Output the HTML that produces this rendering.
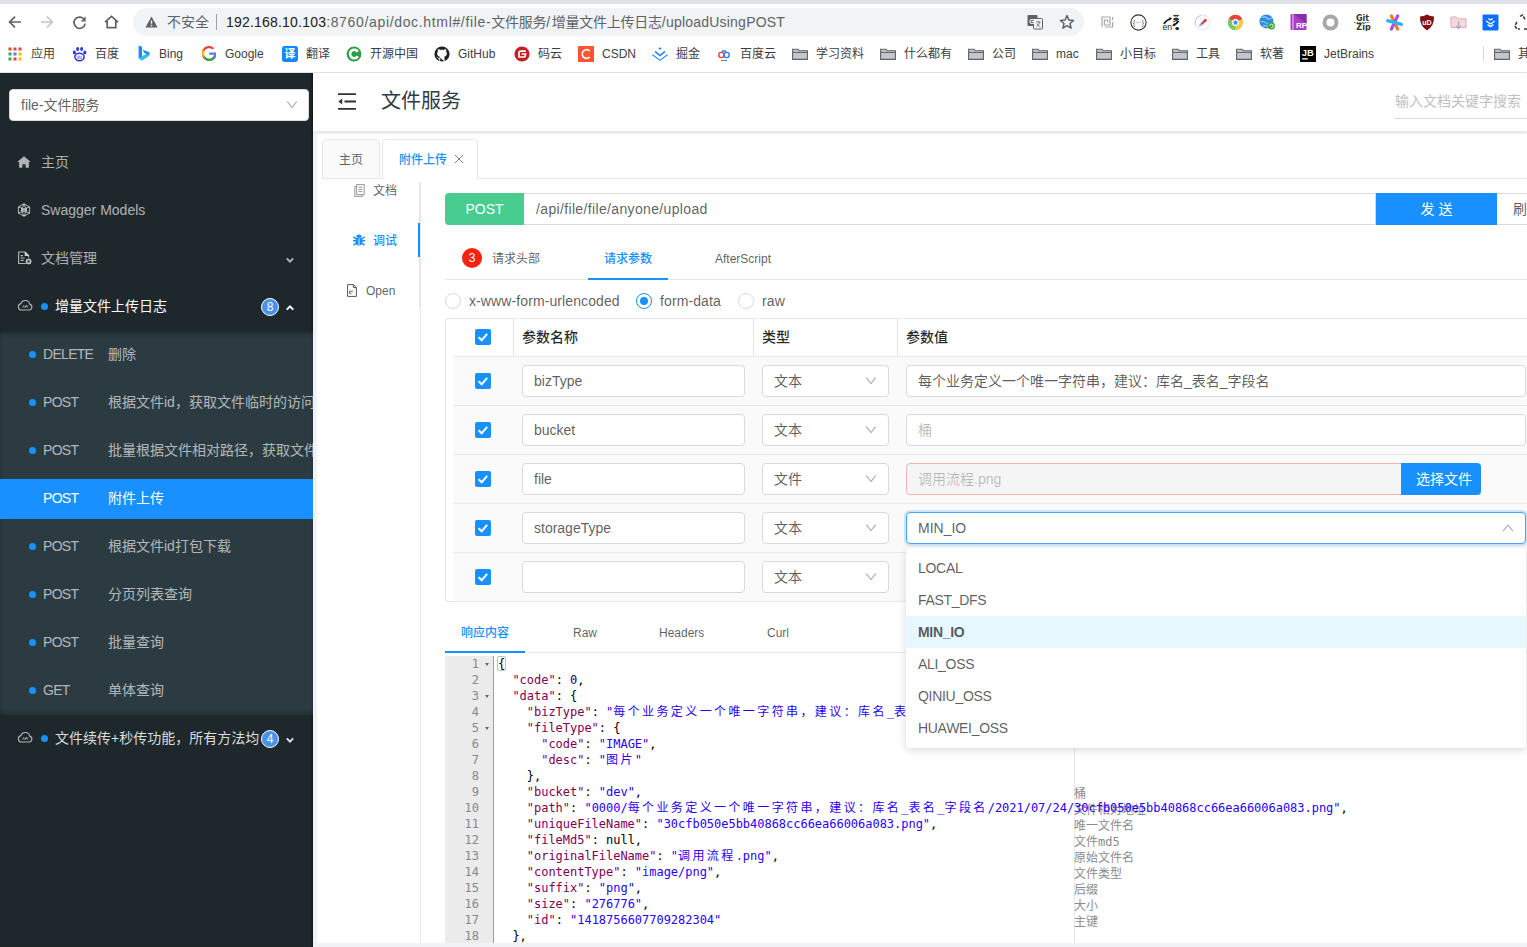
<!DOCTYPE html>
<html lang="zh-CN">
<head>
<meta charset="utf-8">
<title>文件服务</title>
<style>
*{box-sizing:border-box;margin:0;padding:0}
html,body{width:1527px;height:947px;overflow:hidden;background:#f0f2f5}
body{font-family:"Liberation Sans","Noto Sans CJK SC",sans-serif;font-size:14px;color:rgba(0,0,0,.65);position:relative}
.abs{position:absolute}
svg{display:block}
/* ---------- browser chrome ---------- */
#chrome{position:absolute;left:0;top:0;width:1527px;height:73px;background:#fff;border-bottom:1px solid #e3e5e8}
#chrome .strip{position:absolute;left:0;top:0;width:1527px;height:4px;background:#dee1e6}
#chrome .pill{position:absolute;left:133px;top:8px;width:951px;height:28px;border-radius:14px;background:#f1f3f4}
#chrome .url{position:absolute;left:226px;top:13px;font-size:14px;line-height:18px;color:#5f6368;white-space:nowrap;letter-spacing:.1px}
#chrome .url b{font-weight:400;color:#202124}
#chrome .unsafe{position:absolute;left:167px;top:13px;font-size:14px;line-height:18px;color:#5f6368}
#chrome .sep{position:absolute;left:216px;top:14px;width:1px;height:16px;background:#9aa0a6}
.bm{position:absolute;top:45px;height:18px;line-height:18px;font-size:12px;color:#3c4043;white-space:nowrap}
.bmi{position:absolute;top:46px;width:16px;height:16px}
/* ---------- sidebar ---------- */
#side{position:absolute;left:0;top:73px;width:313px;height:874px;background:#1e282c;box-shadow:inset -2px 0 2px -1px rgba(0,0,0,.45);overflow:hidden;color:rgba(255,255,255,.65);font-size:14px}
#side .sel{position:absolute;left:9px;top:16px;width:300px;height:32px;background:#fff;border-radius:4px;border:1px solid #d9d9d9;color:rgba(0,0,0,.65);line-height:30px;padding-left:11px}
#side .sub{position:absolute;left:0;top:258px;width:313px;height:384px;background:#2c3b41;box-shadow:inset 0 5px 6px -4px rgba(0,0,0,.45),inset 0 -5px 6px -4px rgba(0,0,0,.35)}
#side .it{position:absolute;left:0;width:313px;height:40px;line-height:40px;white-space:nowrap}
#side .it .t{position:absolute;left:41px;top:0}
#side .dot{position:absolute;width:7px;height:7px;border-radius:3.5px;background:#1890ff;top:17px;margin-left:-.5px}
#side .m{position:absolute;left:43px;top:0;letter-spacing:-.7px}
#side .n{position:absolute;left:108px;top:0}
#side .badge{position:absolute;left:261px;top:12px;width:18px;height:18px;border-radius:9px;background:#4793ec;border:1px solid #fff;color:#fff;font-size:12px;line-height:16px;text-align:center}
#side .ic{position:absolute;left:17px;top:13px;color:rgba(255,255,255,.65)}
#side .chev{position:absolute;left:285px;top:17px}
#side .selarr{position:absolute;left:276px;top:10px}
#side .act{background:#1890ff;color:#fff;margin-top:1px}
#side .act span{margin-top:-1px}
/* ---------- header ---------- */
#hdr{position:absolute;left:313px;top:73px;width:1214px;height:58px;background:#fff;box-shadow:0 1px 4px rgba(0,21,41,.08)}
#hdr .title{position:absolute;left:68px;top:13px;font-size:20px;line-height:30px;color:#2f3a46}
#hdr .search{position:absolute;left:1082px;top:17px;font-size:14px;line-height:22px;color:#bfbfbf;white-space:nowrap}
#hdr .sline{position:absolute;left:1081px;top:45px;width:140px;height:1px;background:#d9d9d9}
/* ---------- main panel ---------- */
#main{position:absolute;left:317px;top:134px;width:1210px;height:809px;background:#fff;overflow:hidden}

#main .tab{position:absolute;top:5px;height:40px;border:1px solid #e8e8e8;border-radius:4px 4px 0 0;background:#fafafa;font-size:12px;line-height:40px;white-space:nowrap}
#main .tabline{position:absolute;left:5px;top:44px;width:1205px;height:1px;background:#e8e8e8}
#main .vt{position:absolute;margin-top:1px;font-size:12px;line-height:20px;white-space:nowrap}
#main .vline{position:absolute;left:103px;top:48px;width:1px;height:761px;background:#e8e8e8}
#main .vline2{position:absolute;left:102px;top:48px;width:1px;height:125px;background:#e8e8e8}
#main .vbar{position:absolute;left:101px;top:89px;width:2px;height:34px;background:#1890ff}
.post{position:absolute;left:128px;top:59px;width:79px;height:32px;background:#49cc90;color:#fff;font-size:14px;line-height:32px;text-align:center;border-radius:4px 0 0 4px}
.urlin{letter-spacing:.35px;position:absolute;left:207px;top:59px;width:852px;height:32px;border:1px solid #d9d9d9;border-left:0;line-height:30px;padding-left:12px;font-size:14px;color:rgba(0,0,0,.65)}
.send{position:absolute;left:1059px;top:59px;width:121px;height:32px;background:#1890ff;color:#fff;line-height:32px;text-align:center;font-size:14px}
.refresh{position:absolute;left:1180px;top:59px;width:100px;height:32px;border:1px solid #d9d9d9;border-left:0;line-height:31px;padding-left:16px;font-size:14px;color:rgba(0,0,0,.65);white-space:nowrap}
.t2{position:absolute;margin-top:1px;font-size:12px;line-height:20px;white-space:nowrap;color:rgba(0,0,0,.65)}
.blue{color:#1890ff;font-weight:500}
.ink{position:absolute;height:2px;background:#1890ff}
.hline{position:absolute;height:1px;background:#e8e8e8}
.rbadge{position:absolute;left:145px;top:114px;width:20px;height:20px;border-radius:10px;background:#f8220f;color:#fff;font-size:12px;line-height:20px;text-align:center}
.radio{position:absolute;top:159px;width:16px;height:16px;border-radius:8px;border:1px solid #d9d9d9;background:#fff}
.radio.on{border-color:#1890ff}
.radio.on:after{content:"";position:absolute;left:3px;top:3px;width:8px;height:8px;border-radius:4px;background:#1890ff}
.rl{letter-spacing:.1px;position:absolute;top:156px;font-size:14px;line-height:22px;white-space:nowrap}
/* table */
#tbl{position:absolute;left:128px;top:184px;width:1100px;height:284px;border:1px solid #e8e8e8;border-radius:4px 0 0 4px;border-right:0}
#tbl .rowbg{position:absolute;left:8px;width:1100px;height:48px;background:#fafafa}
#tbl .rl2{position:absolute;left:8px;width:1100px;height:1px;background:#e8e8e8}
#tbl .cl{position:absolute;top:0;width:1px;height:282px;background:#e8e8e8}
#tbl .th{position:absolute;top:7px;font-size:14px;line-height:22px;font-weight:500;color:rgba(0,0,0,.85);white-space:nowrap}
.cb{position:absolute;left:29px;width:16px;height:16px;border-radius:2px;background:#1890ff}
.cb svg{position:absolute;left:0;top:0}
.inp{position:absolute;height:32px;border:1px solid #d9d9d9;border-radius:4px;background:#fff;font-size:14px;line-height:30px;padding-left:11px;color:rgba(0,0,0,.65);white-space:nowrap;overflow:hidden}
.inp .arr{position:absolute;right:11px;top:10px}

/* value column */
.vinp{position:absolute;left:589px;width:620px;height:32px;border:1px solid #d9d9d9;border-radius:4px;background:#fff;font-size:14px;line-height:30px;padding-left:11px;color:rgba(0,0,0,.65);white-space:nowrap;overflow:hidden}
.ph{color:#bfbfbf}
.fbtn{position:absolute;left:1084px;top:329px;width:80px;height:32px;background:#1890ff;color:#fff;font-size:14px;line-height:32px;padding-left:15px;border-radius:0 4px 4px 0;white-space:nowrap}
#dd{position:absolute;left:589px;top:414px;width:620px;height:200px;background:#fff;border-radius:4px;box-shadow:0 2px 8px rgba(0,0,0,.15);padding-top:4px;z-index:10}
#dd div{letter-spacing:-.3px;height:32px;line-height:32px;padding-left:12px;font-size:14px;color:rgba(0,0,0,.65);white-space:nowrap}
#dd .s{background:#e6f7ff;font-weight:700}
/* editor */
#ed{position:absolute;left:128px;top:522px;width:1082px;height:287px;background:#fff;font-family:"DejaVu Sans Mono","Liberation Mono","Noto Sans CJK SC",monospace;font-size:12px;line-height:16px;color:#000;overflow:hidden}
#ed .gut{position:absolute;left:0;top:0;width:49px;height:288px;background:#ebebeb;border-right:1px solid #9f9f9f;color:#888}
#ed .gut div{height:16px;text-align:right;padding-right:14px;position:relative;top:0}
#ed .gut i{position:absolute;right:4.5px;top:7px;width:0;height:0;border-left:2.8px solid transparent;border-right:2.8px solid transparent;border-top:3.5px solid #666}
#ed .code{position:absolute;z-index:2;left:53px;top:0;white-space:pre;letter-spacing:-.024px}
#ed .code div{height:16px}
#ed .k{color:#7f0055}
#ed .s{color:#2a00ff}
#ed .n{color:#000080}
#ed .c{letter-spacing:2.4px}
#ed .pm{position:absolute;left:629px;top:0;width:1px;height:288px;background:#e8e8e8}
#ed .an{position:absolute;left:629px;margin-top:2px;color:#8c8c8c;white-space:nowrap}
#chrome .url b{letter-spacing:.2px}#u5{letter-spacing:.22px}#u1{letter-spacing:.66px}#u2,#u4{letter-spacing:-.25px}#u3{letter-spacing:1.6px}
</style>
</head>
<body>
<div id="chrome">
  <div class="strip"></div>
  <div class="pill"></div>
  <div class="unsafe">不安全</div><div class="sep"></div>
  <div class="url"><b>192.168.10.103</b><span id="u1">:8760/api/doc.html#/file-</span><span id="u2">文件服务</span><span id="u3">/</span><span id="u4">增量文件上传日志</span><span id="u5">/uploadUsingPOST</span></div>
  <svg class="abs" style="left:8px;top:15px" width="14" height="14" viewBox="0 0 14 14" ><path d="M13 7 H2.2 M7 1.6 L1.6 7 L7 12.4" fill="none" stroke="#5f6368" stroke-width="1.7"/></svg><svg class="abs" style="left:40px;top:15px" width="14" height="14" viewBox="0 0 14 14" ><path d="M1 7 H11.8 M7 1.6 L12.4 7 L7 12.4" fill="none" stroke="#c4c7cb" stroke-width="1.7"/></svg><svg class="abs" style="left:72px;top:15px" width="15" height="15" viewBox="0 0 15 15" ><path d="M12.6 5.2 A5.6 5.6 0 1 0 13.1 8.6" fill="none" stroke="#5f6368" stroke-width="1.7"/><path d="M13.6 1.6 V6.4 H8.8 Z" fill="#5f6368"/></svg><svg class="abs" style="left:104px;top:15px" width="15" height="14" viewBox="0 0 15 14" ><path d="M1 7.2 L7.5 1.4 L14 7.2 M3.2 6 V12.6 H11.8 V6" fill="none" stroke="#5f6368" stroke-width="1.7"/></svg><svg class="abs" style="left:145px;top:16px" width="13" height="12" viewBox="0 0 13 12" ><path d="M6.5 .6 L12.6 11.4 H.4 Z" fill="#5f6368"/><path d="M6.5 4.4 V7.8 M6.5 8.8 V10.2" stroke="#f1f3f4" stroke-width="1.3"/></svg><svg class="abs" style="left:1027px;top:14px" width="16" height="16" viewBox="0 0 16 16" ><rect x="0.5" y="1" width="10" height="11" rx="1" fill="#5f6368"/><rect x="6.5" y="4.5" width="9" height="10.5" rx="1" fill="#f1f3f4" stroke="#5f6368" stroke-width="1"/><text x="2.2" y="9.6" font-size="7" font-family="Liberation Sans,sans-serif" font-weight="700" fill="#fff">G</text><path d="M9 8 H13.6 M11.3 7 V8 M12.8 8 Q12 11 9.4 12.6 M10 9.6 Q11 11.6 13.4 12.8" stroke="#5f6368" stroke-width=".8" fill="none"/></svg><svg class="abs" style="left:1059px;top:14px" width="16" height="16" viewBox="0 0 16 16" ><path d="M8 1.6 L9.9 6 L14.6 6.4 L11 9.5 L12.1 14.2 L8 11.7 L3.9 14.2 L5 9.5 L1.4 6.4 L6.1 6 Z" fill="none" stroke="#5f6368" stroke-width="1.5" stroke-linejoin="round"/></svg><svg class="abs" style="left:1101px;top:16px" width="13" height="12" viewBox="0 0 13 12" ><path d="M1 11 V1 H9 V9 H3.4 V4 H6.6 V6.4 M11.6 1 V4 M11.6 6 V11 H4" fill="none" stroke="#a5a9ae" stroke-width="1.2"/></svg><svg class="abs" style="left:1130px;top:14px" width="17" height="17" viewBox="0 0 17 17" ><circle cx="8.5" cy="8.5" r="7.6" fill="#fff" stroke="#333" stroke-width="1.1"/><text x="8.5" y="10.8" font-size="6.5" text-anchor="middle" font-family="Liberation Sans,sans-serif" fill="#444">{···}</text></svg><svg class="abs" style="left:1162px;top:13px" width="18" height="18" viewBox="0 0 18 18" ><text x="0.6" y="17.2" font-size="8.6" font-family="Liberation Sans,sans-serif" fill="#222">en</text><text x="10.8" y="7.9" font-size="6.6" font-family="Noto Sans CJK SC,sans-serif" font-weight="700" fill="#222">英</text><path d="M1.8 10.8 Q4.4 7 8.4 5.8" stroke="#111" stroke-width="1.7" fill="none"/><path d="M6.8 4.2 L10.2 5 L7.8 7.6 Z" fill="#111"/><path d="M16.2 7.8 Q15.4 10.6 11.8 11.8" stroke="#111" stroke-width="1.7" fill="none"/><path d="M12.6 10 L10 12.6 L13.4 13.2 Z" fill="#111"/><ellipse cx="15.2" cy="15.4" rx="1.9" ry="1.5" fill="#222"/></svg><svg class="abs" style="left:1194px;top:14px" width="17" height="17" viewBox="0 0 17 17" ><defs><linearGradient id="brg" x1="0" y1="1" x2="1" y2="0"><stop offset="0" stop-color="#b9c6f2" stop-opacity=".2"/><stop offset=".45" stop-color="#a06ab4"/><stop offset=".8" stop-color="#d2453c"/><stop offset="1" stop-color="#f02a1a"/></linearGradient></defs><circle cx="8.5" cy="8.5" r="7.4" fill="#fff" stroke="#e3e4ee" stroke-width="1"/><path d="M1.6 11.4 A7.4 7.4 0 0 1 6.4 1.5" stroke="#b8c2f0" stroke-width="1" fill="none"/><path d="M3.6 12.6 L10.6 5 L12.6 5.2 L12.8 7 L5.4 13.6 Z" fill="url(#brg)"/></svg><svg class="abs" style="left:1227px;top:14px" width="17" height="17" viewBox="0 0 17 17" ><circle cx="8.5" cy="8.5" r="7.7" fill="#f5c842"/><path d="M8.5 8.5 L1.83 4.65 A7.7 7.7 0 0 1 15.17 4.65 Z" fill="#e8453c"/><path d="M8.5 8.5 L1.83 4.65 A7.7 7.7 0 0 0 8.5 16.2 Z" fill="#79c86c"/><path d="M8.5 8.5 L15.17 4.65 L9 4.65 Z" fill="#e8453c"/><circle cx="8.5" cy="8.5" r="3.6" fill="#fff"/><path d="M8.5 6.2 L9.15 7.8 L10.8 7.9 L9.5 8.95 L9.9 10.6 L8.5 9.65 L7.1 10.6 L7.5 8.95 L6.2 7.9 L7.85 7.8 Z" fill="#2b8fe0" stroke="#2b8fe0" stroke-width=".7" stroke-linejoin="round"/></svg><svg class="abs" style="left:1259px;top:14px" width="17" height="16" viewBox="0 0 17 16" ><circle cx="7.4" cy="7.4" r="7" fill="#2f8be0"/><path d="M3 3.4 Q6 2 8 4 T12.6 4 M1.4 8 Q5 6.6 7 9 T13.6 9 M3.4 12.4 Q6 10.8 9 12.6" stroke="#8fd0ff" stroke-width="1.1" fill="none"/><circle cx="12.4" cy="11.8" r="3.6" fill="#3fa63a"/><path d="M10.8 11.8 A1.7 1.7 0 1 1 12.4 13.5" stroke="#d8ffd0" stroke-width="1" fill="none"/></svg><svg class="abs" style="left:1290px;top:14px" width="17" height="16" viewBox="0 0 17 16" ><rect x="0.5" y="0" width="16" height="16" rx="1" fill="#a93fc4"/><path d="M4 0 H16.5 V10 Z" fill="#8e2aa8"/><rect x="2.4" y="0" width="1.1" height="16" fill="#e7b8f2"/><text x="6" y="14" font-size="8" font-weight="700" font-family="Liberation Sans,sans-serif" fill="#fff">RP</text></svg><svg class="abs" style="left:1322px;top:14px" width="17" height="17" viewBox="0 0 17 17" ><circle cx="8.5" cy="8.5" r="6" fill="none" stroke="#a8a8a8" stroke-width="4"/></svg><svg class="abs" style="left:1353px;top:13px" width="19" height="18" viewBox="0 0 19 18" ><text x="9.5" y="7.6" font-size="8" font-weight="700" text-anchor="middle" font-family="DejaVu Sans,Liberation Sans,sans-serif" fill="#333">Git</text><path d="M1 9.6 H17" stroke="#555" stroke-width="1" stroke-dasharray="1 .6"/><text x="10.5" y="17.4" font-size="8" font-weight="700" text-anchor="middle" font-family="DejaVu Sans,Liberation Sans,sans-serif" fill="#333">Zip</text></svg><svg class="abs" style="left:1386px;top:14px" width="17" height="17" viewBox="0 0 17 17" ><path d="M5.4 2 L11.6 15" stroke="#ff7a1a" stroke-width="3.2" stroke-linecap="round"/><path d="M11.6 2 L5.4 15" stroke="#b04cf0" stroke-width="3.2" stroke-linecap="round"/><path d="M1.6 6.6 L15.4 10.4" stroke="#25b7f0" stroke-width="3.2" stroke-linecap="round"/></svg><svg class="abs" style="left:1419px;top:14px" width="16" height="17" viewBox="0 0 16 17" ><path d="M8 .6 Q11 2.6 15 2.6 Q15.4 12 8 16.4 Q.6 12 1 2.6 Q5 2.6 8 .6 Z" fill="#800f12"/><text x="8" y="11" font-size="7" font-weight="700" text-anchor="middle" font-family="Liberation Sans,sans-serif" fill="#fff">uD</text></svg><svg class="abs" style="left:1450px;top:14px" width="17" height="17" viewBox="0 0 17 17" ><path d="M1 3 H6.4 L8 4.8 H16 V13.6 H1 Z" fill="#f3dcd6" stroke="#d9a9c8" stroke-width="1"/><path d="M8.5 7 V13.4 M6 11.4 L8.5 14.6 L11 11.4" stroke="#b9a6d6" stroke-width="1.4" fill="none"/></svg><svg class="abs" style="left:1482px;top:14px" width="17" height="17" viewBox="0 0 17 17" ><rect x=".5" y=".5" width="16" height="16" rx="1.2" fill="#0d6efd"/><path d="M4.2 7 L8.5 10 L12.8 7 M5.6 10.6 L8.5 12.6 L11.4 10.6 M6.4 4.6 L8.5 6 L10.6 4.6" stroke="#fff" stroke-width="1.3" fill="none"/></svg><svg class="abs" style="left:1514px;top:14px" width="17" height="17" viewBox="0 0 17 17" ><path d="M6 2.4 L8.5 1 L11 5.4 M3 8 L.8 12 L3 15 H6 M10 15 H14 L16 11.6 L14 8.4" stroke="#3c4043" stroke-width="1.6" fill="none" stroke-dasharray="3.4 1.2"/></svg>
  <svg class="abs" style="left:8px;top:47px" width="14" height="14" viewBox="0 0 14 14" ><rect x="0.5" y="0.5" width="3" height="3" fill="#ea4335"/><rect x="5.5" y="0.5" width="3" height="3" fill="#ea4335"/><rect x="10.5" y="0.5" width="3" height="3" fill="#ea4335"/><rect x="0.5" y="5.5" width="3" height="3" fill="#34a853"/><rect x="5.5" y="5.5" width="3" height="3" fill="#4285f4"/><rect x="10.5" y="5.5" width="3" height="3" fill="#fbbc05"/><rect x="0.5" y="10.5" width="3" height="3" fill="#34a853"/><rect x="5.5" y="10.5" width="3" height="3" fill="#ea4335"/><rect x="10.5" y="10.5" width="3" height="3" fill="#fbbc05"/></svg><div class="bm" style="left:31px">应用</div><svg class="abs" style="left:72px;top:46px" width="15" height="16" viewBox="0 0 15 16" ><ellipse cx="7.5" cy="11" rx="4.6" ry="3.8" fill="none" stroke="#2932e1" stroke-width="1.5"/><ellipse cx="2.4" cy="6.6" rx="1.5" ry="2" fill="#2932e1"/><ellipse cx="5.6" cy="3" rx="1.5" ry="2.1" fill="#2932e1"/><ellipse cx="9.6" cy="3" rx="1.5" ry="2.1" fill="#2932e1"/><ellipse cx="12.8" cy="6.6" rx="1.5" ry="2" fill="#2932e1"/><text x="7.5" y="13" font-size="4.5" text-anchor="middle" font-family="Liberation Sans,sans-serif" fill="#2932e1">du</text></svg><div class="bm" style="left:95px">百度</div><svg class="abs" style="left:138px;top:45px" width="12" height="17" viewBox="0 0 12 17" ><path d="M.6 .6 L4 1.8 V11.4 L8.4 9 L6 7.8 L4.8 4.8 L11.4 7.2 V10.6 L4 15.4 L.6 13.2 Z" fill="#1b8fe8"/><path d="M4 11.4 L8.4 9 L11.4 10.6 L4 15.4 L.6 13.2 Z" fill="#36c2f0"/></svg><div class="bm" style="left:159px">Bing</div><svg class="abs" style="left:202px;top:46px" width="14" height="15" viewBox="0 0 14 15" ><path d="M13.4 7.6 A6.4 6.4 0 1 1 11.4 2.8" fill="none" stroke="#ea4335" stroke-width="2.2"/><path d="M2 4.4 A6.4 6.4 0 0 0 2 10.8" fill="none" stroke="#fbbc05" stroke-width="2.2"/><path d="M2 10.8 A6.4 6.4 0 0 0 11.6 12.4" fill="none" stroke="#34a853" stroke-width="2.2"/><path d="M11.6 12.4 A6.4 6.4 0 0 0 13.4 7.6 H7.2" fill="none" stroke="#4285f4" stroke-width="2.2"/></svg><div class="bm" style="left:225px">Google</div><svg class="abs" style="left:282px;top:46px" width="16" height="16" viewBox="0 0 16 16" ><rect width="16" height="16" rx="2.4" fill="#1687f7"/><text x="8" y="12.4" font-size="11" font-weight="700" text-anchor="middle" font-family="Noto Sans CJK SC,sans-serif" fill="#fff">译</text></svg><div class="bm" style="left:306px">翻译</div><svg class="abs" style="left:346px;top:46px" width="16" height="16" viewBox="0 0 16 16" ><circle cx="8" cy="8" r="7.4" fill="#26a043"/><path d="M11.8 5.8 A4.2 4.2 0 1 0 11.8 10.2" fill="none" stroke="#fff" stroke-width="2.6"/></svg><div class="bm" style="left:370px">开源中国</div><svg class="abs" style="left:434px;top:46px" width="16" height="16" viewBox="0 0 16 16" ><circle cx="8" cy="8" r="7.6" fill="#1b1f23"/><path d="M5.8 15 V12.4 Q3.4 12.8 3 10.8 M10.2 15 V11.8 Q10.2 11 9.8 10.6 Q12.6 10.2 12.6 7.4 Q12.6 6.2 11.8 5.4 Q12.2 4.4 11.8 3.4 Q10.8 3.4 9.8 4.2 Q8 3.8 6.2 4.2 Q5.2 3.4 4.2 3.4 Q3.8 4.4 4.2 5.4 Q3.4 6.2 3.4 7.4 Q3.4 10.2 6.2 10.6 Q5.8 11 5.8 11.8" fill="#fff" stroke="#fff" stroke-width=".6"/></svg><div class="bm" style="left:458px">GitHub</div><svg class="abs" style="left:514px;top:46px" width="16" height="16" viewBox="0 0 16 16" ><circle cx="8" cy="8" r="7.6" fill="#c71d23"/><path d="M11.8 5.2 H7 Q5 5.2 5 7.2 V11 H10 Q11.4 11 11.4 9.6 V8 H7.6" fill="none" stroke="#fff" stroke-width="1.7"/></svg><div class="bm" style="left:538px">码云</div><svg class="abs" style="left:578px;top:46px" width="16" height="16" viewBox="0 0 16 16" ><rect width="16" height="16" fill="#fc5531"/><path d="M11.6 5 A4.2 4.4 0 1 0 11.6 11" fill="none" stroke="#fff" stroke-width="1.7"/></svg><div class="bm" style="left:602px">CSDN</div><svg class="abs" style="left:652px;top:47px" width="16" height="14" viewBox="0 0 16 14" ><path d="M6.4 1.4 L8 .2 L9.6 1.4 L8 2.7 Z M3.6 4 L8 7.4 L12.4 4 L13.6 5 L8 9.4 L2.4 5 Z M.8 7.2 L8 12.8 L15.2 7.2 L16 8 L8 14 L0 8 Z" fill="#1e80ff"/></svg><div class="bm" style="left:676px">掘金</div><svg class="abs" style="left:716px;top:46px" width="16" height="16" viewBox="0 0 16 16" ><rect width="16" height="16" rx="2" fill="#fff"/><circle cx="5.4" cy="9" r="2.6" fill="none" stroke="#ef4136" stroke-width="1.4"/><circle cx="10.6" cy="9" r="2.6" fill="none" stroke="#2c7ff6" stroke-width="1.4"/><path d="M5.6 6.4 A2.6 2.6 0 0 1 10.4 6.4" fill="none" stroke="#2c7ff6" stroke-width="1.4"/><path d="M5 14.4 H8" stroke="#ef4136" stroke-width="1"/><path d="M8 14.4 H11" stroke="#2c7ff6" stroke-width="1"/></svg><div class="bm" style="left:740px">百度云</div><svg class="abs" style="left:792px;top:48px" width="16" height="12" viewBox="0 0 16 12" ><path d="M.6 1.2 H6 L7.4 2.8 H15.4 V11.4 H.6 Z" fill="#c3c6ca" stroke="#5f6368" stroke-width="1.1"/><path d="M.6 4.4 H15.4" stroke="#5f6368" stroke-width="1"/></svg><div class="bm" style="left:816px">学习资料</div><svg class="abs" style="left:880px;top:48px" width="16" height="12" viewBox="0 0 16 12" ><path d="M.6 1.2 H6 L7.4 2.8 H15.4 V11.4 H.6 Z" fill="#c3c6ca" stroke="#5f6368" stroke-width="1.1"/><path d="M.6 4.4 H15.4" stroke="#5f6368" stroke-width="1"/></svg><div class="bm" style="left:904px">什么都有</div><svg class="abs" style="left:968px;top:48px" width="16" height="12" viewBox="0 0 16 12" ><path d="M.6 1.2 H6 L7.4 2.8 H15.4 V11.4 H.6 Z" fill="#c3c6ca" stroke="#5f6368" stroke-width="1.1"/><path d="M.6 4.4 H15.4" stroke="#5f6368" stroke-width="1"/></svg><div class="bm" style="left:992px">公司</div><svg class="abs" style="left:1032px;top:48px" width="16" height="12" viewBox="0 0 16 12" ><path d="M.6 1.2 H6 L7.4 2.8 H15.4 V11.4 H.6 Z" fill="#c3c6ca" stroke="#5f6368" stroke-width="1.1"/><path d="M.6 4.4 H15.4" stroke="#5f6368" stroke-width="1"/></svg><div class="bm" style="left:1056px">mac</div><svg class="abs" style="left:1096px;top:48px" width="16" height="12" viewBox="0 0 16 12" ><path d="M.6 1.2 H6 L7.4 2.8 H15.4 V11.4 H.6 Z" fill="#c3c6ca" stroke="#5f6368" stroke-width="1.1"/><path d="M.6 4.4 H15.4" stroke="#5f6368" stroke-width="1"/></svg><div class="bm" style="left:1120px">小目标</div><svg class="abs" style="left:1172px;top:48px" width="16" height="12" viewBox="0 0 16 12" ><path d="M.6 1.2 H6 L7.4 2.8 H15.4 V11.4 H.6 Z" fill="#c3c6ca" stroke="#5f6368" stroke-width="1.1"/><path d="M.6 4.4 H15.4" stroke="#5f6368" stroke-width="1"/></svg><div class="bm" style="left:1196px">工具</div><svg class="abs" style="left:1236px;top:48px" width="16" height="12" viewBox="0 0 16 12" ><path d="M.6 1.2 H6 L7.4 2.8 H15.4 V11.4 H.6 Z" fill="#c3c6ca" stroke="#5f6368" stroke-width="1.1"/><path d="M.6 4.4 H15.4" stroke="#5f6368" stroke-width="1"/></svg><div class="bm" style="left:1260px">软著</div><svg class="abs" style="left:1300px;top:46px" width="16" height="16" viewBox="0 0 16 16" ><rect width="16" height="16" fill="#000"/><text x="1.8" y="9.6" font-size="9.4" font-weight="700" font-family="Liberation Sans,sans-serif" fill="#fff">JB</text><rect x="2.2" y="12.2" width="5.6" height="1.3" fill="#fff"/></svg><div class="bm" style="left:1324px">JetBrains</div><div class="abs" style="left:1483px;top:46px;width:1px;height:16px;background:#dadce0"></div><svg class="abs" style="left:1494px;top:48px" width="16" height="12" viewBox="0 0 16 12" ><path d="M.6 1.2 H6 L7.4 2.8 H15.4 V11.4 H.6 Z" fill="#c3c6ca" stroke="#5f6368" stroke-width="1.1"/><path d="M.6 4.4 H15.4" stroke="#5f6368" stroke-width="1"/></svg><div class="bm" style="left:1518px">其他书签</div>
</div>
<div id="side">
  <div class="sel">file-文件服务<svg class="selarr" viewBox="0 0 12 12" width="12" height="12" fill="none" stroke="#b0b0b0" stroke-width="1.25"><path d="M1.3 1.6 L6 7.6 L10.7 1.6"/></svg></div>
  <div class="it" style="top:69px"><svg class="ic" viewBox="0 0 14 14" width="14" height="14"><path d="M7 1.2 L13.2 6.6 Q13.5 7 13 7.1 H11.9 V12.3 Q11.9 12.8 11.4 12.8 H8.6 V9.2 H5.4 V12.8 H2.6 Q2.1 12.8 2.1 12.3 V7.1 H1 Q.5 7 .8 6.6 Z" fill="currentColor"/></svg><span class="t">主页</span></div>
  <div class="it" style="top:117px"><svg class="ic" viewBox="0 0 14 14" width="14" height="14" fill="none" stroke="currentColor" stroke-width="1"><path d="M7 .8 L12.6 3.9 V10.1 L7 13.2 L1.4 10.1 V3.9 Z"/><path d="M7 .8 L9.6 7 L7 13.2 L4.4 7 Z"/><path d="M1.4 3.9 L9.6 7 L1.4 10.1 M12.6 3.9 L4.4 7 L12.6 10.1"/></svg><span class="t">Swagger Models</span></div>
  <div class="it" style="top:165px"><svg class="ic" viewBox="0 0 16 14" width="16" height="14" fill="none" stroke="currentColor" stroke-width="1.1"><path d="M9 12.5 H1.6 V1 H8.2 L11.6 4.4 V6.4"/><path d="M8.2 1 V4.4 H11.6" fill="currentColor"/><path d="M3.6 4.6 H6 M3.6 7 H7.6 M3.6 9.4 H6.6"/><circle cx="11.6" cy="10.4" r="1.9" stroke-width="1.6"/><path d="M11.6 7.4 V8.2 M11.6 12.6 V13.4 M8.6 10.4 H9.4 M13.8 10.4 H14.6 M9.5 8.3 L10.1 8.9 M13.1 11.9 L13.7 12.5 M9.5 12.5 L10.1 11.9 M13.1 8.9 L13.7 8.3" stroke-width="1.2"/></svg><span class="t">文档管理</span><svg class="chev" viewBox="0 0 10 10" width="10" height="10" fill="none" stroke="currentColor" stroke-width="2"><path d="M1.8 3.4 L5 6.6 L8.2 3.4"/></svg></div>
  <div class="it" style="top:213px;color:#fff"><svg class="ic" viewBox="0 0 16 12" width="16" height="12" fill="none" stroke="currentColor" stroke-width="1.1"><path d="M4 11 H12.2 A3 3 0 0 0 12.6 5.1 A4.6 4.6 0 0 0 3.8 4.6 A3.3 3.3 0 0 0 4 11 Z"/><path d="M5.6 8.6 L6.6 6.6 L7.6 8.6 M8.6 8.6 V6.6 H9.6 V7.6 H8.6 M10.8 6.6 V8.6" stroke-width=".8"/></svg><i class="dot" style="left:41px"></i><span class="t" style="left:55px">增量文件上传日志</span><span class="badge">8</span><svg class="chev" viewBox="0 0 10 10" width="10" height="10" fill="none" stroke="currentColor" stroke-width="2"><path d="M1.8 6.6 L5 3.4 L8.2 6.6"/></svg></div>
  <div class="sub"></div>
  <div class="it" style="top:261px"><i class="dot" style="left:29px"></i><span class="m">DELETE</span><span class="n">删除</span></div>
  <div class="it" style="top:309px"><i class="dot" style="left:29px"></i><span class="m">POST</span><span class="n">根据文件id，获取文件临时的访问地址</span></div>
  <div class="it" style="top:357px"><i class="dot" style="left:29px"></i><span class="m">POST</span><span class="n">批量根据文件相对路径，获取文件临时的访问地址</span></div>
  <div class="it act" style="top:405px"><span class="m">POST</span><span class="n">附件上传</span></div>
  <div class="it" style="top:453px"><i class="dot" style="left:29px"></i><span class="m">POST</span><span class="n">根据文件id打包下载</span></div>
  <div class="it" style="top:501px"><i class="dot" style="left:29px"></i><span class="m">POST</span><span class="n">分页列表查询</span></div>
  <div class="it" style="top:549px"><i class="dot" style="left:29px"></i><span class="m">POST</span><span class="n">批量查询</span></div>
  <div class="it" style="top:597px"><i class="dot" style="left:29px"></i><span class="m">GET</span><span class="n">单体查询</span></div>
  <div class="it" style="top:645px;color:rgba(255,255,255,.85)"><svg class="ic" viewBox="0 0 16 12" width="16" height="12" fill="none" stroke="currentColor" stroke-width="1.1"><path d="M4 11 H12.2 A3 3 0 0 0 12.6 5.1 A4.6 4.6 0 0 0 3.8 4.6 A3.3 3.3 0 0 0 4 11 Z"/><path d="M5.6 8.6 L6.6 6.6 L7.6 8.6 M8.6 8.6 V6.6 H9.6 V7.6 H8.6 M10.8 6.6 V8.6" stroke-width=".8"/></svg><i class="dot" style="left:41px"></i><span class="t" style="left:55px;width:205px;overflow:hidden">文件续传+秒传功能，所有方法均需要</span><span class="badge">4</span><svg class="chev" viewBox="0 0 10 10" width="10" height="10" fill="none" stroke="currentColor" stroke-width="2"><path d="M1.8 3.4 L5 6.6 L8.2 3.4"/></svg></div>
</div>
<div id="hdr">
  <svg class="abs" style="left:25px;top:20px" width="18" height="17" viewBox="0 0 18 17" fill="none" stroke="#303133" stroke-width="1.8"><path d="M0 1.2 H18 M6.5 8.5 H18 M0 15.8 H18"/><path d="M4.2 5.6 V11.4 L0.4 8.5 Z" fill="#303133" stroke="none"/></svg>
  <div class="title">文件服务</div>
  <div class="search">输入文档关键字搜索</div><div class="sline"></div>
</div>
<div id="main">
  <div class="tab" style="left:5px;width:58px;padding-left:16px">主页</div>
  <div class="tabline"></div>
  <div class="tab blue" style="left:65px;width:96px;padding-left:16px;background:#fff;border-bottom-color:#fff">附件上传<svg style="position:absolute;left:71px;top:14px" viewBox="0 0 10 10" width="10" height="10" stroke="rgba(0,0,0,.5)" stroke-width="1" fill="none"><path d="M1 1 L9 9 M9 1 L1 9"/></svg></div>
  <div class="vline"></div><div class="vline2"></div><div class="vbar"></div>
  <svg class="abs" style="left:37px;top:50px" width="11" height="13" viewBox="0 0 11 13" fill="none" stroke="#8a8a8a" stroke-width=".9"><path d="M2.6 .6 H10.2 V10.6 H2.6 Z M2.6 2.4 H.8 V12.4 H8.4 V10.6"/><path d="M4.4 3.2 H8.4 M4.4 5.4 H8.4 M4.4 7.6 H8.4"/></svg><div class="vt" style="left:56px;top:46px">文档</div>
  <svg class="abs" style="left:36px;top:100px" width="12" height="12" viewBox="0 0 12 12" fill="#1890ff"><ellipse cx="6" cy="7.3" rx="3.5" ry="4.3"/><path d="M3.2 3 A2.8 2.6 0 0 1 8.8 3 Z"/><path d="M0 6 H3 V7.6 H0 Z M9 6 H12 V7.6 H9 Z M.8 2.2 L3.6 4.2 L2.7 5.4 L-.1 3.4 Z M11.2 2.2 L8.4 4.2 L9.3 5.4 L12.1 3.4 Z M0 10.6 L2.8 8.6 L3.7 9.8 L.9 11.8 Z M12 10.6 L9.2 8.6 L8.3 9.8 L11.1 11.8 Z"/><path d="M6 4.4 V11.2" stroke="#fff" stroke-width=".9"/></svg><div class="vt blue" style="left:56px;top:96px">调试</div>
  <svg class="abs" style="left:30px;top:150px" width="10" height="13" viewBox="0 0 10 13" fill="none" stroke="#555" stroke-width="1"><path d="M.6 .6 H6.4 L9.4 3.6 V12.4 H.6 Z"/><path d="M6.4 .6 V3.6 H9.4" /><path d="M2.6 7.2 H6 M2.6 7.2 V9.4 M2.6 9.4 H4.4" stroke-width=".9"/></svg><div class="vt" style="left:49px;top:146px">Open</div>
  <div class="post">POST</div>
  <div class="urlin">/api/file/file/anyone/upload</div>
  <div class="send">发 送</div>
  <div class="refresh">刷新变量</div>
  <div class="rbadge">3</div>
  <div class="t2" style="left:175px;top:114px">请求头部</div>
  <div class="t2 blue" style="left:287px;top:114px">请求参数</div>
  <div class="t2" style="left:398px;top:114px">AfterScript</div>
  <div class="hline" style="left:128px;top:145px;width:1100px"></div>
  <div class="ink" style="left:271px;top:144px;width:80px"></div>
  <div class="radio" style="left:128px"></div><div class="rl" style="left:152px">x-www-form-urlencoded</div>
  <div class="radio on" style="left:319px"></div><div class="rl" style="left:343px">form-data</div>
  <div class="radio" style="left:421px"></div><div class="rl" style="left:445px">raw</div>
  <div id="tbl">
    <div class="cl" style="left:67px"></div><div class="cl" style="left:307px"></div><div class="cl" style="left:451px"></div>
    <div class="cb" style="top:10px"><svg viewBox="0 0 16 16" width="16" height="16" fill="none" stroke="#fff" stroke-width="2"><path d="M3.6 8.2 L6.7 11.2 L12.2 4.8"/></svg></div>
    <div class="th" style="left:76px">参数名称</div><div class="th" style="left:316px">类型</div><div class="th" style="left:460px">参数值</div>
    <div class="rowbg" style="top:38px"></div><div class="rl2" style="top:37px"></div><div class="cb" style="top:54px"><svg viewBox="0 0 16 16" width="16" height="16" fill="none" stroke="#fff" stroke-width="2"><path d="M3.6 8.2 L6.7 11.2 L12.2 4.8"/></svg></div><div class="inp" style="left:76px;top:46px;width:223px">bizType</div><div class="inp" style="left:316px;top:46px;width:127px">文本<svg class="arr" viewBox="0 0 12 12" width="12" height="12" fill="none" stroke="#b0b0b0" stroke-width="1.25"><path d="M1.3 1.6 L6 7.6 L10.7 1.6"/></svg></div>
<div class="rowbg" style="top:87px"></div><div class="rl2" style="top:86px"></div><div class="cb" style="top:103px"><svg viewBox="0 0 16 16" width="16" height="16" fill="none" stroke="#fff" stroke-width="2"><path d="M3.6 8.2 L6.7 11.2 L12.2 4.8"/></svg></div><div class="inp" style="left:76px;top:95px;width:223px">bucket</div><div class="inp" style="left:316px;top:95px;width:127px">文本<svg class="arr" viewBox="0 0 12 12" width="12" height="12" fill="none" stroke="#b0b0b0" stroke-width="1.25"><path d="M1.3 1.6 L6 7.6 L10.7 1.6"/></svg></div>
<div class="rowbg" style="top:136px"></div><div class="rl2" style="top:135px"></div><div class="cb" style="top:152px"><svg viewBox="0 0 16 16" width="16" height="16" fill="none" stroke="#fff" stroke-width="2"><path d="M3.6 8.2 L6.7 11.2 L12.2 4.8"/></svg></div><div class="inp" style="left:76px;top:144px;width:223px">file</div><div class="inp" style="left:316px;top:144px;width:127px">文件<svg class="arr" viewBox="0 0 12 12" width="12" height="12" fill="none" stroke="#b0b0b0" stroke-width="1.25"><path d="M1.3 1.6 L6 7.6 L10.7 1.6"/></svg></div>
<div class="rowbg" style="top:185px"></div><div class="rl2" style="top:184px"></div><div class="cb" style="top:201px"><svg viewBox="0 0 16 16" width="16" height="16" fill="none" stroke="#fff" stroke-width="2"><path d="M3.6 8.2 L6.7 11.2 L12.2 4.8"/></svg></div><div class="inp" style="left:76px;top:193px;width:223px">storageType</div><div class="inp" style="left:316px;top:193px;width:127px">文本<svg class="arr" viewBox="0 0 12 12" width="12" height="12" fill="none" stroke="#b0b0b0" stroke-width="1.25"><path d="M1.3 1.6 L6 7.6 L10.7 1.6"/></svg></div>
<div class="rowbg" style="top:234px"></div><div class="rl2" style="top:233px"></div><div class="cb" style="top:250px"><svg viewBox="0 0 16 16" width="16" height="16" fill="none" stroke="#fff" stroke-width="2"><path d="M3.6 8.2 L6.7 11.2 L12.2 4.8"/></svg></div><div class="inp" style="left:76px;top:242px;width:223px"></div><div class="inp" style="left:316px;top:242px;width:127px">文本<svg class="arr" viewBox="0 0 12 12" width="12" height="12" fill="none" stroke="#b0b0b0" stroke-width="1.25"><path d="M1.3 1.6 L6 7.6 L10.7 1.6"/></svg></div>

  </div>
  <div class="vinp" style="top:231px">每个业务定义一个唯一字符串，建议：库名_表名_字段名</div>
  <div class="vinp ph" style="top:280px">桶</div>
  <div class="vinp" style="top:329px;width:496px;background:#f5f5f5;border-color:#f3b5b2;color:rgba(0,0,0,.25);border-radius:4px 0 0 4px">调用流程.png</div>
  <div class="fbtn">选择文件</div>
  <div class="vinp" style="top:378px;border-color:#40a9ff;box-shadow:0 0 0 2px rgba(24,144,255,.2)">MIN_IO<svg style="position:absolute;right:11px;top:9px" viewBox="0 0 12 12" width="12" height="12" fill="none" stroke="#b0b0b0" stroke-width="1.25"><path d="M1 9.2 L6 3.2 L11 9.2"/></svg></div>
  <div id="dd"><div>LOCAL</div><div>FAST_DFS</div><div class="s">MIN_IO</div><div>ALI_OSS</div><div>QINIU_OSS</div><div>HUAWEI_OSS</div></div>
  <div class="t2 blue" style="left:144px;top:488px">响应内容</div>
  <div class="t2" style="left:256px;top:488px">Raw</div>
  <div class="t2" style="left:342px;top:488px">Headers</div>
  <div class="t2" style="left:450px;top:488px">Curl</div>
  <div class="hline" style="left:128px;top:518px;width:1100px"></div>
  <div class="ink" style="left:128px;top:517px;width:80px"></div>
  <div id="ed"><div class="gut"><div>1<i></i></div><div>2</div><div>3<i></i></div><div>4</div><div>5<i></i></div><div>6</div><div>7</div><div>8</div><div>9</div><div>10</div><div>11</div><div>12</div><div>13</div><div>14</div><div>15</div><div>16</div><div>17</div><div>18</div></div><div class="pm"></div><div class="abs" style="left:52px;top:0;width:9px;height:15px;border:1px solid #c0c0c0;border-radius:2px"></div><div class="code"><div>{</div><div>  <span class="k">"code"</span>: <span class="n">0</span>,</div><div>  <span class="k">"data"</span>: {</div><div>    <span class="k">"bizType"</span>: <span class="s">"<span class="c">每个业务定义一个唯一字符串，建议：库名</span>_<span class="c">表名</span>_<span class="c">字段名</span>"</span>,</div><div>    <span class="k">"fileType"</span>: {</div><div>      <span class="k">"code"</span>: <span class="s">"IMAGE"</span>,</div><div>      <span class="k">"desc"</span>: <span class="s">"<span class="c">图片</span>"</span></div><div>    },</div><div>    <span class="k">"bucket"</span>: <span class="s">"dev"</span>,</div><div>    <span class="k">"path"</span>: <span class="s">"0000/<span class="c">每个业务定义一个唯一字符串，建议：库名</span>_<span class="c">表名</span>_<span class="c">字段名</span>/2021/07/24/30cfb050e5bb40868cc66ea66006a083.png"</span>,</div><div>    <span class="k">"uniqueFileName"</span>: <span class="s">"30cfb050e5bb40868cc66ea66006a083.png"</span>,</div><div>    <span class="k">"fileMd5"</span>: null,</div><div>    <span class="k">"originalFileName"</span>: <span class="s">"<span class="c">调用流程</span>.png"</span>,</div><div>    <span class="k">"contentType"</span>: <span class="s">"image/png"</span>,</div><div>    <span class="k">"suffix"</span>: <span class="s">"png"</span>,</div><div>    <span class="k">"size"</span>: <span class="s">"276776"</span>,</div><div>    <span class="k">"id"</span>: <span class="s">"1418756607709282304"</span></div><div>  },</div></div><div class="an" style="top:128px">桶</div><div class="an" style="top:144px">文件相对地址</div><div class="an" style="top:160px">唯一文件名</div><div class="an" style="top:176px">文件md5</div><div class="an" style="top:192px">原始文件名</div><div class="an" style="top:208px">文件类型</div><div class="an" style="top:224px">后缀</div><div class="an" style="top:240px">大小</div><div class="an" style="top:256px">主键</div></div>
</div>
</body>
</html>
